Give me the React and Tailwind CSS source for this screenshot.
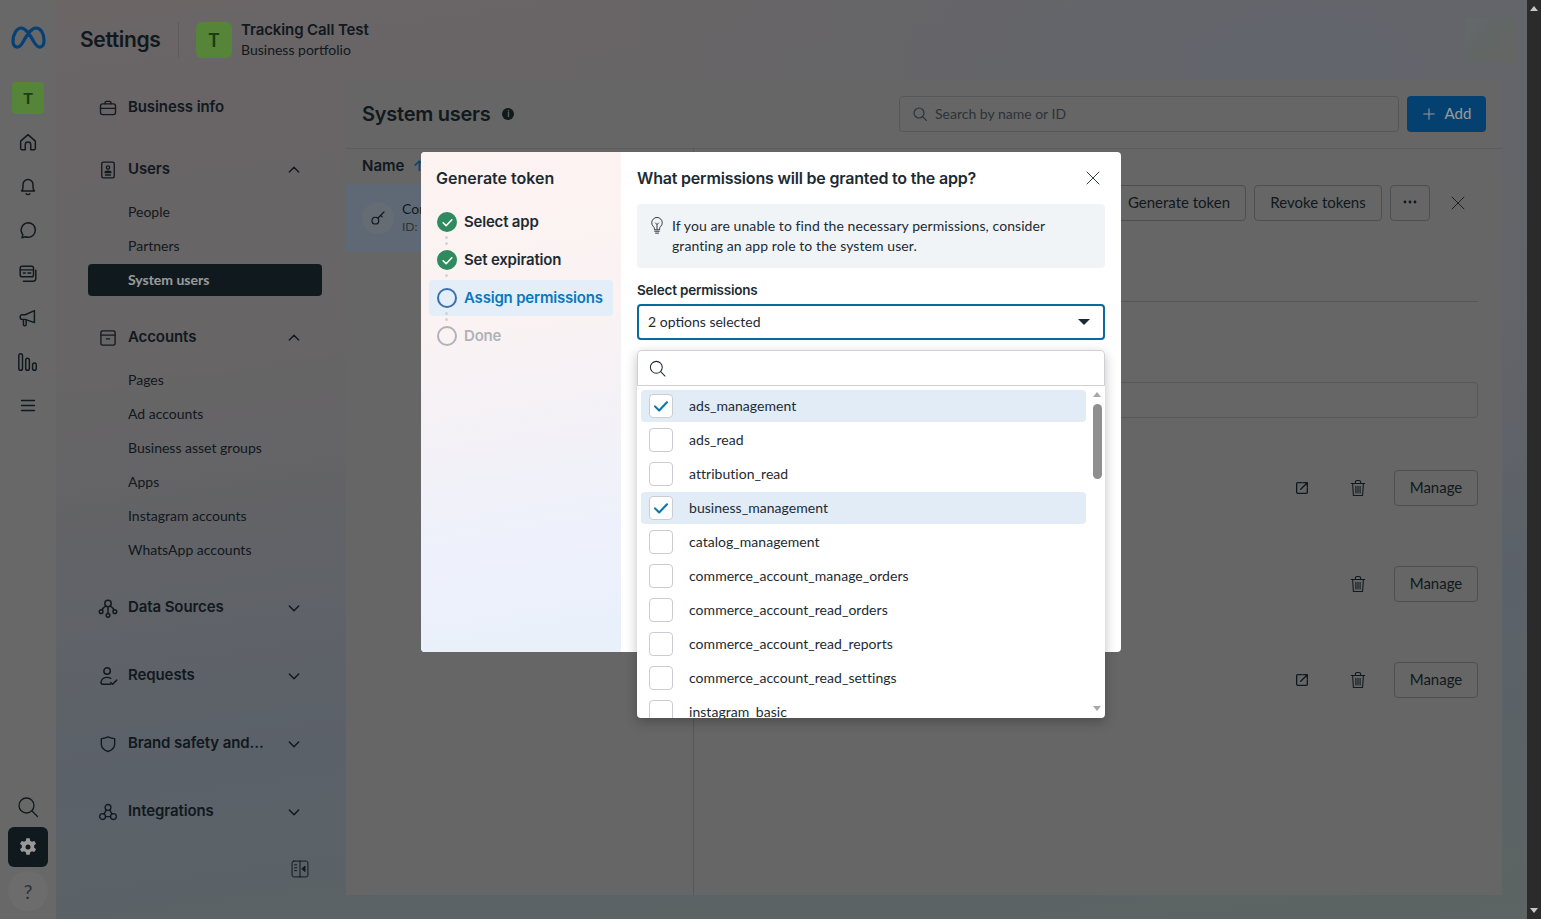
import React from "react";

const S = ({ size = 20, sw = 1.6, className = "", children, vb = "0 0 24 24" }) => (
  <svg width={size} height={size} viewBox={vb} fill="none" stroke="currentColor" strokeWidth={sw} strokeLinecap="round" strokeLinejoin="round" className={className}>
    {children}
  </svg>
);

const MetaLogo = () => (
  <svg width="36" height="26" viewBox="0 0 36 26" fill="none" stroke="#0a6cc4" strokeWidth="3.2" strokeLinecap="round" strokeLinejoin="round">
    <path d="M3 16C3 9 7 3 11 3c5 0 9 7 13 14 2.500 4 4.500 5.500 6.500 5C33 21.300 34 18.500 34 15.500 34 8 30.500 3 26 3c-5 0-9 7-13 14-2.500 4.500-4.500 5.500-6.500 5C4 21.500 3 19 3 16z" />
  </svg>
);

const Home = () => <S size={22}><path d="M4 11 12 4l8 7v8a1.500 1.500 0 0 1-1.500 1.500H15V15a3 3 0 0 0-6 0v5.500H5.500A1.500 1.500 0 0 1 4 19z" /></S>;
const Bell = () => <S size={22}><path d="M5 17.500c1-1 1.500-2.500 1.500-4.500v-2.500a5.500 5.500 0 0 1 11 0V13c0 2 .5 3.500 1.500 4.500z" /><path d="M10 20.500c1 1.200 3 1.200 4 0" /></S>;
const Chat = () => <S size={22}><path d="M12 4a8 8 0 0 1 0 16 8 8 0 0 1-3-.6L5.500 20.500l.8-3.600A8 8 0 0 1 12 4z" /></S>;
const Cards = () => <S size={22}><rect x="3.500" y="3.500" width="14.500" height="11.500" rx="2" /><path d="M3.500 7.500H18M7 11h2M12 11h3" /><path d="M20.500 8v9a3 3 0 0 1-3 3H7" /></S>;
const Mega = () => <S size={22}><path d="M19 4v13L9 13.500H5.500a2 2 0 0 1-2-2v-1a2 2 0 0 1 2-2H9z" /><path d="M7 13.500V19a1.500 1.500 0 0 0 3 0v-4.500" /></S>;
const Bars = () => <S size={22} sw={1.6}><rect x="2" y="3" width="4" height="18" rx="2" /><rect x="9.500" y="8" width="4" height="13" rx="2" /><rect x="17" y="13" width="4" height="8" rx="2" /></S>;
const Menu = () => <S size={22}><path d="M5 6h14M5 11.500h14M5 17h14" /></S>;
const SearchI = ({ size = 24, sw = 1.300 }) => <S size={size} sw={sw}><circle cx="10.500" cy="10.500" r="7.500" /><path d="m16 16 5.500 5.500" /></S>;
const Brief = () => <S size={20}><rect x="3" y="7" width="18" height="13" rx="2.500" /><path d="M8.500 7V5.500A1.500 1.500 0 0 1 10 4h4a1.500 1.500 0 0 1 1.500 1.500V7M3 12.500h18" /></S>;
const Contact = () => <S size={20}><rect x="4.500" y="2.500" width="15" height="19" rx="2" /><circle cx="12" cy="9" r="2" /><path d="M8.500 14.500c.5-1.500 6.500-1.500 7 0v.5h-7zM9 18h6" /></S>;
const Archive = () => <S size={20}><rect x="3.500" y="3.500" width="17" height="17" rx="2" /><path d="M3.500 8.500h17M10 13h4" /></S>;
const Nodes = () => <S size={22}><circle cx="12" cy="7" r="3.500" /><circle cx="4.500" cy="16" r="2" /><circle cx="12" cy="20" r="2" /><circle cx="19.500" cy="16" r="2" /><path d="M9.500 10c-2 1-3.500 2.500-3.800 4.500M14.500 10c2 1 3.500 2.500 3.800 4.500M12 10.500V18" /></S>;
const UserCheck = () => <S size={22}><circle cx="11" cy="6.500" r="3.500" /><path d="M15 21H6.500C4.500 21 4 19.500 4.500 18c.8-3 3.500-4.500 6.500-4.500 1.500 0 2.800.3 4 1" /><path d="m15 19 2 2 4.500-4.500" /></S>;
const Shield = () => <S size={20}><path d="M12 3.500c3 1.500 5.500 2 8 2V12c0 4.500-3.500 7.500-8 9-4.500-1.500-8-4.500-8-9V5.500c2.500 0 5-.5 8-2z" /></S>;
const Trio = () => <S size={20}><circle cx="12" cy="6.500" r="3.500" /><circle cx="5.500" cy="17.500" r="3.500" /><circle cx="18.500" cy="17.500" r="3.500" /><path d="m10 9.500-2.800 5M14 9.500l2.800 5M9 17.500h6" /></S>;
const ChevUp = () => <S size={16} sw={2.200}><path d="m5 15 7-7 7 7" /></S>;
const ChevDown = () => <S size={16} sw={2.200}><path d="m5 9 7 7 7-7" /></S>;
const Collapse = () => (
  <S size={20} sw={1.200}>
    <rect x="2.500" y="2.500" width="19" height="19" rx="2" />
    <path d="M12 2.500v19M5.500 7H8M5.500 10.500H8M5.500 14H8" />
    <path d="M18 9v6l-3.500-3z" fill="currentColor" />
  </S>
);
const Close = ({ size = 18 }) => <S size={size} sw={1.200}><path d="M4 4l16 16M20 4 4 20" /></S>;
const ExtLink = () => <S size={16} sw={2}><path d="M12 4H5.500A1.500 1.500 0 0 0 4 5.500v13A1.500 1.500 0 0 0 5.500 20h13a1.500 1.500 0 0 0 1.500-1.500V12" /><path d="M10 14 20 4M14 4h6v6" /></S>;
const Trash = () => <S size={20} sw={1.300}><path d="M4 6.500h16M9 6V4.500A1.500 1.500 0 0 1 10.500 3h3A1.500 1.500 0 0 1 15 4.500V6" /><path d="M5.500 6.500 6.500 21h11l1-14.500M9.500 10v8M12 10v8M14.500 10v8" /></S>;
const Key = () => <S size={18} sw={1.600}><circle cx="8.500" cy="15.500" r="4.500" /><path d="M12 12 20 4M15.500 8.500l2 2" /></S>;
const Bulb = () => <S size={18} sw={1.200}><path d="M8.500 16.500V15c0-1-.7-1.700-1.500-2.500a7 7 0 1 1 10 0c-.8.800-1.500 1.500-1.500 2.500v1.500z" /><path d="M9 19h6M10 21.500h4M12 16V10l-2-2M12 10l2-2" /></S>;
const Check = ({ size = 12, sw = 3 }) => <S size={size} sw={sw}><path d="m4 12.500 5.500 5.500L20 7" /></S>;
const Gear = () => (
  <svg width="20" height="20" viewBox="0 0 24 24" fill="#ffffff">
    <path fillRule="evenodd" d="M10 1.500h4l.6 3a8 8 0 0 1 2.100 1.200l2.900-1 2 3.500-2.300 2a8 8 0 0 1 0 2.400l2.300 2-2 3.500-2.900-1a8 8 0 0 1-2.100 1.200l-.6 3h-4l-.6-3a8 8 0 0 1-2.100-1.200l-2.900 1-2-3.500 2.300-2a8 8 0 0 1 0-2.400l-2.300-2 2-3.500 2.900 1A8 8 0 0 1 9.400 4.500zM12 9a3 3 0 1 0 0 6 3 3 0 0 0 0-6z" />
  </svg>
);

const HEAD = "font-['Inter',sans-serif] font-semibold";

const Group = ({ icon, label, open, className = "" }) => (
  <div className={`flex h-[34px] items-center pr-[20px] text-[#1c2b33] ${className}`}>
    <div className="flex w-[40px] justify-center">{icon}</div>
    <span className={`flex-1 pb-[2px] text-[15px] tracking-[-0.1px] ${HEAD}`}>{label}</span>
    {open === undefined ? null : open ? <ChevUp /> : <ChevDown />}
  </div>
);

const Sub = ({ label, active }) => (
  <div className="flex h-[34px] items-center">
    <div className={`flex h-[32px] w-full items-center rounded-[4px] pb-[2px] pl-[40px] text-[14px] ${active ? "bg-[#1c2b33] font-bold text-white" : "text-[#1c2b33]"}`}>{label}</div>
  </div>
);

const Btn = ({ children, className = "" }) => (
  <button className={`flex h-[36px] items-center justify-center rounded-[4px] border border-[#7f8589] pb-[2px] text-[15px] text-[#1c2b33] ${className}`}>{children}</button>
);

const ManageRow = ({ ext }) => (
  <div className="mt-[60px] flex items-center justify-end gap-4 first:mt-[52px]">
    {ext && <div className="flex w-[40px] justify-center text-[#1c2b33]"><ExtLink /></div>}
    <div className="flex w-[40px] justify-center text-[#1c2b33]"><Trash /></div>
    <Btn className="w-[84px]">Manage</Btn>
  </div>
);

const Step = ({ state, label, last }) => (
  <div className={`relative flex h-[36px] items-center gap-[7px] rounded-[4px] pl-[8px] ${state === "active" ? "bg-[#e3eef8]" : ""}`}>
    {state === "done" && <span className="flex h-[20px] w-[20px] items-center justify-center rounded-full bg-[#2f8a5f] text-white"><Check size={13} sw={3} /></span>}
    {state === "active" && <span className="h-[20px] w-[20px] rounded-full border-2 border-[#3b6fb0]" />}
    {state === "todo" && <span className="h-[20px] w-[20px] rounded-full border-2 border-[#b0b3b8]" />}
    <span className={`text-[15px] tracking-[-0.2px] ${HEAD} ${state === "active" ? "text-[#0a78be]" : state === "todo" ? "text-[#b0b3b8]" : "text-[#1c2b33]"}`}>{label}</span>
    {!last && (
      <span className="absolute bottom-[-5px] left-[16px] flex flex-col gap-[3px]">
        <span className="h-[3px] w-[3px] rounded-full bg-[#cfd3d8]" />
        <span className="h-[3px] w-[3px] rounded-full bg-[#cfd3d8]" />
      </span>
    )}
  </div>
);

const perms = [
  ["ads_management", true],
  ["ads_read", false],
  ["attribution_read", false],
  ["business_management", true],
  ["catalog_management", false],
  ["commerce_account_manage_orders", false],
  ["commerce_account_read_orders", false],
  ["commerce_account_read_reports", false],
  ["commerce_account_read_settings", false],
  ["instagram_basic", false],
];

const Option = ({ label, on }) => (
  <div className={`mb-[2px] flex h-[32px] shrink-0 items-center gap-4 rounded-[4px] pl-[8px] ${on ? "bg-[#e1ecf7]" : ""}`}>
    <span className="flex h-[24px] w-[24px] items-center justify-center rounded-[4px] border border-[#c9cdd1] bg-white text-[#0a78a8]">
      {on && <Check size={18} sw={2.800} />}
    </span>
    <span className="pb-[2px] text-[14px] tracking-[0.04px] text-[#1c2b33]">{label}</span>
  </div>
);

const Dropdown = () => (
  <div className="absolute left-0 right-0 top-[46px] z-10 flex h-[368px] flex-col overflow-hidden rounded-[4px] bg-white shadow-[0_4px_12px_rgba(0,0,0,0.25)]">
    <div className="flex h-[36px] shrink-0 items-center rounded-t-[4px] border border-[#ced0d4] pl-[10px] text-[#1c2b33]">
      <SearchI size={19} sw={1.300} />
    </div>
    <div className="relative flex min-h-0 flex-1 flex-col pl-[4px] pr-[19px] pt-[4px]">
      {perms.map(([l, o]) => <Option key={l} label={l} on={o} />)}
      <div className="absolute bottom-0 right-[2px] top-0 flex w-[12px] flex-col items-center">
        <span className="mt-[6px] h-0 w-0 border-x-[4.500px] border-b-[5px] border-x-transparent border-b-[#a8a8a8]" />
        <span className="mt-[7px] h-[75px] w-[9px] rounded-full bg-[#8f8f8f]" />
        <span className="mb-[7px] mt-auto h-0 w-0 border-x-[4.500px] border-t-[5px] border-x-transparent border-t-[#a8a8a8]" />
      </div>
    </div>
  </div>
);

const Modal = () => (
  <div className="absolute left-[421px] top-[152px] z-20 flex h-[500px] w-[700px] rounded-[4px] bg-white">
    <div className="w-[200px] rounded-l-[4px] bg-[linear-gradient(170deg,#fdf3f1_0%,#faf2f3_35%,#eef1fb_75%,#e9f0fa_100%)] px-[8px]">
      <div className={`mt-[16px] pl-[7px] text-[16px] leading-[20px] text-[#1c2b33] ${HEAD}`}>Generate token</div>
      <div className="mt-[16px] flex flex-col gap-[2px]">
        <Step state="done" label="Select app" />
        <Step state="done" label="Set expiration" />
        <Step state="active" label="Assign permissions" />
        <Step state="todo" label="Done" last />
      </div>
    </div>
    <div className="flex-1 px-[16px]">
      <div className="mt-[16px] flex h-[20px] items-center justify-between">
        <span className={`text-[16px] tracking-[-0.19px] text-[#1c2b33] ${HEAD}`}>What permissions will be granted to the app?</span>
        <span className="mr-[3px] text-[#1c2b33]"><Close /></span>
      </div>
      <div className="mt-[16px] flex h-[64px] gap-[6px] rounded-[4px] bg-[#f1f4f7] py-[12px] pl-[11px]">
        <span className="mt-[1px] text-[#1c2b33]"><Bulb /></span>
        <p className="w-[410px] text-[14px] leading-[20px] tracking-[0.08px] text-[#1c2b33]">If you are unable to find the necessary permissions, consider granting an app role to the system user.</p>
      </div>
      <div className={`mt-[14px] text-[13.500px] leading-[16px] tracking-[-0.2px] text-[#1c2b33] ${HEAD}`}>Select permissions</div>
      <div className="relative mt-[6px]">
        <div className="flex h-[36px] items-center justify-between rounded-[4px] border-2 border-[#0a6a9c] bg-white pl-[9px] pr-[13px] text-[14px] text-[#1c2b33]">
          <span className="pb-[2px]">2 options selected</span>
          <span className="h-0 w-0 border-x-[6px] border-t-[6px] border-x-transparent border-t-[#1c2b33]" />
        </div>
        <Dropdown />
      </div>
    </div>
  </div>
);

export default function App() {
  return (
    <div className="flex h-[919px] w-full overflow-hidden bg-[#2b2b2b] font-['Lato',sans-serif]">
      <div className="relative flex h-full w-[1527px] shrink-0 bg-[radial-gradient(ellipse_at_85%_8%,#a3a8b4_0%,rgba(163,168,180,0)_40%),linear-gradient(172deg,#b2a8aa_0%,#aba8aa_38%,#98a2b0_70%,#99a8a5_100%)]">
        <aside className="flex h-full w-[56px] shrink-0 flex-col items-center bg-[#adadad] text-[#1c2b33]">
          <div className="mt-[25px] flex h-[26px] items-center"><MetaLogo /></div>
          <div className="mt-[31px] flex h-[32px] w-[32px] items-center justify-center rounded-[4px] bg-[#8fdc5e] text-[16px] font-bold text-[#2a6a20]">T</div>
          <div className="mt-[6px] flex flex-col">
            {[Home, Bell, Chat, Cards, Mega, Bars, Menu].map((I, i) => (
              <div key={i} className="flex h-[44px] w-[40px] items-center justify-center"><I /></div>
            ))}
          </div>
          <div className="mt-auto flex h-[40px] items-center justify-center"><SearchI size={24} /></div>
          <div className="flex h-[40px] w-[40px] items-center justify-center rounded-[6px] bg-[#1c2b33]"><Gear /></div>
          <div className="mb-[8px] mt-[4px] flex h-[40px] w-[40px] items-center justify-center rounded-full bg-[#b4b4b4] text-[20px] text-[#4a555c]">?</div>
        </aside>

        <div className="flex min-w-0 flex-1 flex-col">
          <header className="flex h-[80px] shrink-0 items-center text-[#1c2b33]">
            <span className={`ml-[24px] w-[80px] whitespace-nowrap text-[21px] tracking-[-0.35px] ${HEAD}`}>Settings</span>
            <span className="ml-[18px] h-[36px] w-px bg-[#999999]" />
            <span className="ml-[17px] flex h-[36px] w-[36px] items-center justify-center rounded-[6px] bg-[#8fdc5e] text-[18px] font-bold text-[#2a6a20]">T</span>
            <div className="ml-[9px] flex flex-col">
              <span className={`text-[15px] leading-[20px] tracking-[-0.1px] ${HEAD}`}>Tracking Call Test</span>
              <span className="text-[14px] leading-[20px]">Business portfolio</span>
            </div>
            <div className="ml-auto mr-[11px] h-[44px] w-[51px] bg-[linear-gradient(135deg,#a7aeb0,#a3aaa9,#aaaaa6)]" />
          </header>

          <div className="flex min-h-0 flex-1">
            <nav className="flex w-[290px] shrink-0 flex-col pl-[32px] pr-[24px] pt-[11px]">
              <Group icon={<Brief />} label="Business info" />
              <Group icon={<Contact />} label="Users" open className="mt-[28px]" />
              <div className="mt-[8px]">
                <Sub label="People" />
                <Sub label="Partners" />
                <Sub label="System users" active />
              </div>
              <Group icon={<Archive />} label="Accounts" open className="mt-[24px]" />
              <div className="mt-[8px]">
                {["Pages", "Ad accounts", "Business asset groups", "Apps", "Instagram accounts", "WhatsApp accounts"].map((x) => <Sub key={x} label={x} />)}
              </div>
              <Group icon={<Nodes />} label="Data Sources" open={false} className="mt-[24px]" />
              <Group icon={<UserCheck />} label="Requests" open={false} className="mt-[34px]" />
              <Group icon={<Shield />} label="Brand safety and..." open={false} className="mt-[34px]" />
              <Group icon={<Trio />} label="Integrations" open={false} className="mt-[34px]" />
              <div className="mt-[30px] flex justify-end pr-[12px] text-[#1c2b33]"><Collapse /></div>
            </nav>

            <main className="mb-[24px] mr-[25px] flex min-w-0 flex-1 flex-col bg-[#aaaaaa]">
              <div className="flex h-[69px] shrink-0 items-center border-b border-[#999999] pl-[16px] pr-[16px] text-[#1c2b33]">
                <span className={`text-[20px] tracking-[-0.25px] ${HEAD}`}>System users</span>
                <span className="ml-[12px] flex h-[12px] w-[12px] items-center justify-center rounded-full bg-[#1c2b33] text-[9px] font-bold text-[#aaaaaa]">i</span>
                <div className="ml-auto flex h-[36px] w-[500px] items-center gap-[7px] rounded-[4px] border border-[#8e9396] pl-[12px] text-[14px] text-[#4a555c]">
                  <SearchI size={16} sw={1.800} />
                  <span className="pb-[2px]">Search by name or ID</span>
                </div>
                <button className="ml-[8px] flex h-[36px] w-[79px] items-center justify-center gap-[9px] rounded-[4px] bg-[#086bbb] text-[15px] text-white">
                  <S size={14} sw={1.800}><path d="M12 3v18M3 12h18" /></S>
                  <span className="pb-[2px]">Add</span>
                </button>
              </div>

              <div className="flex min-h-0 flex-1">
                <section className="w-[348px] shrink-0 border-r border-[#8e9396]">
                  <div className={`flex h-[35px] items-center gap-[8px] pl-[16px] text-[15px] text-[#1c2b33] ${HEAD}`}>Name <span className="text-[#0a78be]">↑</span></div>
                  <div className="flex h-[68px] items-center gap-[8px] bg-[#9eb0c4] pl-[16px] text-[14px] text-[#1c2b33]">
                    <span className="flex h-[32px] w-[32px] items-center justify-center rounded-full bg-[#a8b4c0]"><Key /></span>
                    <div className="flex flex-col leading-[18px]">
                      <span>Conversions API System User</span>
                      <span className="text-[12px] text-[#4a555c]">ID: 61558888888888</span>
                    </div>
                  </div>
                </section>

                <section className="min-w-0 flex-1 pl-[16px] pr-[24px]">
                  <div className="mt-[36px] flex items-center justify-end gap-[8px] pr-[11px]">
                    <Btn className="w-[134px]">Generate token</Btn>
                    <Btn className="w-[128px]">Revoke tokens</Btn>
                    <Btn className="w-[40px] font-bold tracking-[1px]">
                      <svg width="14" height="4" viewBox="0 0 14 4" fill="currentColor"><circle cx="2" cy="2" r="1.400" /><circle cx="7" cy="2" r="1.400" /><circle cx="12" cy="2" r="1.400" /></svg>
                    </Btn>
                    <span className="ml-[11px] text-[#1c2b33]"><Close size={18} /></span>
                  </div>
                  <div className="mt-[80px] h-px bg-[#8e9396]" />
                  <div className="mt-[80px] h-[36px] rounded-[4px] border border-[#8e9396]" />
                  <div>
                    <ManageRow ext />
                    <ManageRow />
                    <ManageRow ext />
                  </div>
                </section>
              </div>
            </main>
          </div>
        </div>

        <div className="pointer-events-none absolute inset-0 z-10 bg-black/40" />
        <Modal />
      </div>

      <div className="flex h-full w-[14px] shrink-0 flex-col items-center bg-[#2b2b2b] py-[6px]">
        <span className="h-0 w-0 border-x-[4.500px] border-b-[5px] border-x-transparent border-b-[#c8c8c8]" />
        <span className="mt-auto h-0 w-0 border-x-[4.500px] border-t-[5px] border-x-transparent border-t-[#c8c8c8]" />
      </div>
    </div>
  );
}
